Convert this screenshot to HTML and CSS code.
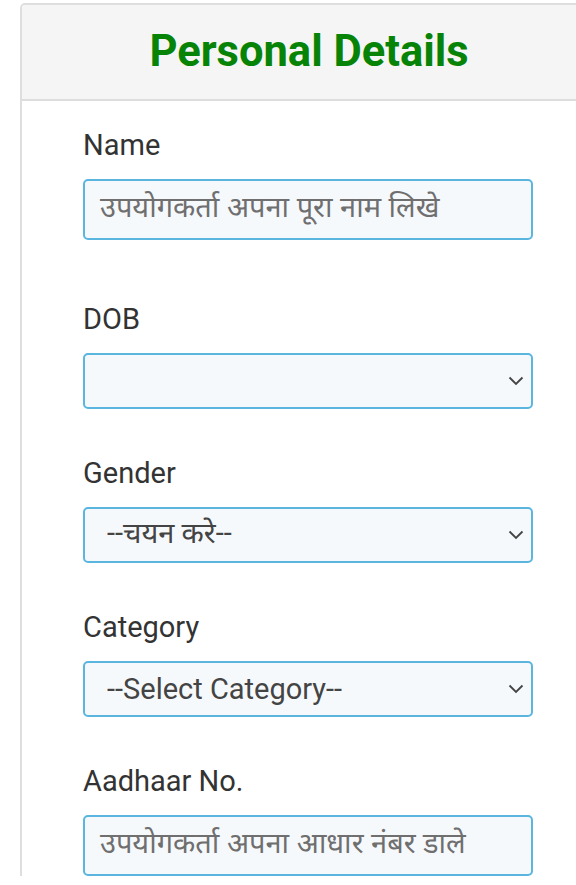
FILE: index.html
```html
<!DOCTYPE html>
<html lang="hi">
<head>
<meta charset="utf-8">
<title>Personal Details</title>
<link rel="stylesheet" href="styles.css">
</head>
<body>
<div class="card">
  <div class="card-header">
    <h2 class="card-title">Personal Details</h2>
  </div>
  <div class="card-body">
    <div class="group group-first">
      <label class="label">Name</label>
      <div class="control input"><span class="placeholder">उपयोगकर्ता अपना पूरा नाम लिखे</span></div>
    </div>
    <div class="group">
      <label class="label">DOB</label>
      <div class="control select"><span class="value"></span>
        <svg class="chev" viewBox="0 0 16 10" width="16" height="10"><path d="M1.5 1.5 L8 8 L14.5 1.5" fill="none" stroke="#444" stroke-width="1.8"/></svg>
      </div>
    </div>
    <div class="group">
      <label class="label">Gender</label>
      <div class="control select"><span class="value">--चयन करे--</span>
        <svg class="chev" viewBox="0 0 16 10" width="16" height="10"><path d="M1.5 1.5 L8 8 L14.5 1.5" fill="none" stroke="#444" stroke-width="1.8"/></svg>
      </div>
    </div>
    <div class="group">
      <label class="label">Category</label>
      <div class="control select"><span class="value">--Select Category--</span>
        <svg class="chev" viewBox="0 0 16 10" width="16" height="10"><path d="M1.5 1.5 L8 8 L14.5 1.5" fill="none" stroke="#444" stroke-width="1.8"/></svg>
      </div>
    </div>
    <div class="group">
      <label class="label">Aadhaar No.</label>
      <div class="control input"><span class="placeholder">उपयोगकर्ता अपना आधार नंबर डाले</span></div>
    </div>
  </div>
</div>
</body>
</html>
```
FILE: styles.css
```css
* { box-sizing: border-box; }
html, body { margin: 0; padding: 0; background: #fff; overflow: hidden; }
body {
  font-family: Roboto, "Noto Sans Devanagari", "Noto Sans", sans-serif;
  color: #333;
  width: 576px;
  height: 885px;
}
.card {
  margin: 3px -22px 0 20px;
  border: 2px solid #dedede;
  border-bottom: none;
  border-radius: 5px 5px 0 0;
  background: #fff;
}
.card-header {
  background: #f5f5f5;
  border-bottom: 2px solid #dddddd;
  height: 96px;
  display: flex;
  align-items: center;
  justify-content: center;
  border-radius: 4px 4px 0 0;
}
.card-title {
  margin: 0;
  color: #078307;
  font-family: Roboto, sans-serif;
  font-weight: 700;
  font-size: 43.5px;
  line-height: 1;
}
.card-body {
  padding: 27px 61px 0 61px;
}
.group { margin-bottom: 47px; }
.group-first { margin-bottom: 62px; }
.label {
  display: block;
  font-size: 29px;
  line-height: 31px;
  padding-top: 2px;
  color: #333;
  margin-bottom: 18px;
}
.control {
  width: 450px;
  border: 2px solid #5bb6df;
  border-radius: 5px;
  background: #f6f9fc;
  display: flex;
  align-items: center;
}
.input { height: 61px; padding-left: 15px; }
.select { height: 56px; padding: 0 7px 0 22px; justify-content: space-between; }
.placeholder {
  font-size: 29px;
  color: #6f6f6f;
  font-family: "Noto Sans Devanagari", "Noto Sans", Roboto, sans-serif;
}
.value {
  font-size: 29px;
  color: #444;
}
.chev { flex: none; }
```
